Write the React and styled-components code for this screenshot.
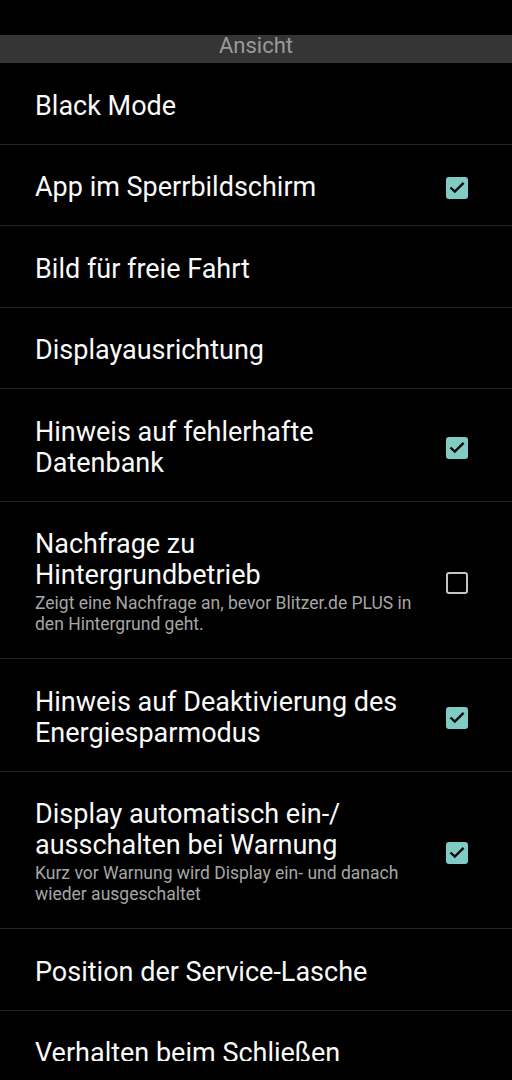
import React from "react";
import styled, { createGlobalStyle } from "styled-components";

const GlobalStyle = createGlobalStyle`
  html, body {
    margin: 0;
    padding: 0;
    background: #000;
  }
  body {
    font-family: Roboto, "Noto Sans", sans-serif;
    -webkit-font-smoothing: antialiased;
  }
`;

const Screen = styled.div`
  width: 512px;
  height: 1080px;
  background: #000;
  display: flex;
  flex-direction: column;
  overflow: hidden;
`;

const StatusBar = styled.div`
  height: 35px;
  flex-shrink: 0;
`;

// list area ends above the navigation strip, last row is cut off
const Viewport = styled.div`
  height: 1026px;
  flex-shrink: 0;
  overflow: hidden;
`;

const SectionHeader = styled.div`
  height: 28px;
  background: #353535;
  color: #9a9a9a;
  font-size: 22px;
  line-height: 21px;
  text-align: center;
`;

const Row = styled.div`
  display: flex;
  align-items: center;
  padding: 27.5px 44px 22px 35px;
  border-bottom: 1px solid #232323;
`;

const TextCol = styled.div`
  flex: 1;
  max-width: 385px;
  margin-right: 20px;
`;

const Title = styled.div`
  color: #fafafa;
  font-size: 27px;
  line-height: 31px;
`;

const Summary = styled.div`
  color: #a6a6a6;
  font-size: 17.5px;
  line-height: 21px;
  margin-top: 2px;
  padding-bottom: 1px;
`;

const Box = styled.div`
  width: 22px;
  height: 22px;
  margin-left: auto;
  box-sizing: border-box;
  border-radius: 3px;
  background: ${(p) => (p.$checked ? "#80cbc4" : "transparent")};
  border: ${(p) => (p.$checked ? "none" : "2px solid #c4c4c4")};
  flex-shrink: 0;
  display: flex;
`;

const Checkbox = ({ checked }) => (
  <Box $checked={checked}>
    {checked && (
      <svg width="22" height="22" viewBox="0 0 22 22">
        <path
          d="M4.5 10.5 L8.8 14.6 L17.6 5.8"
          fill="none"
          stroke="#0a0a0a"
          strokeWidth="2.4"
        />
      </svg>
    )}
  </Box>
);

const items = [
  { title: "Black Mode" },
  { title: "App im Sperrbildschirm", checked: true },
  { title: "Bild für freie Fahrt" },
  { title: "Displayausrichtung" },
  { title: "Hinweis auf fehlerhafte Datenbank", checked: true },
  {
    title: "Nachfrage zu Hintergrundbetrieb",
    summary: "Zeigt eine Nachfrage an, bevor Blitzer.de PLUS in den Hintergrund geht.",
    checked: false,
  },
  { title: "Hinweis auf Deaktivierung des Energiesparmodus", checked: true },
  {
    title: "Display automatisch ein-/ ausschalten bei Warnung",
    summary: "Kurz vor Warnung wird Display ein- und danach wieder ausgeschaltet",
    checked: true,
  },
  { title: "Position der Service-Lasche" },
  { title: "Verhalten beim Schließen" },
];

export default function App() {
  return (
    <>
      <GlobalStyle />
      <Screen>
        <StatusBar />
        <Viewport>
          <SectionHeader>Ansicht</SectionHeader>
          {items.map((it) => (
            <Row key={it.title}>
              <TextCol>
                <Title>{it.title}</Title>
                {it.summary && <Summary>{it.summary}</Summary>}
              </TextCol>
              {it.checked !== undefined && <Checkbox checked={it.checked} />}
            </Row>
          ))}
        </Viewport>
      </Screen>
    </>
  );
}
